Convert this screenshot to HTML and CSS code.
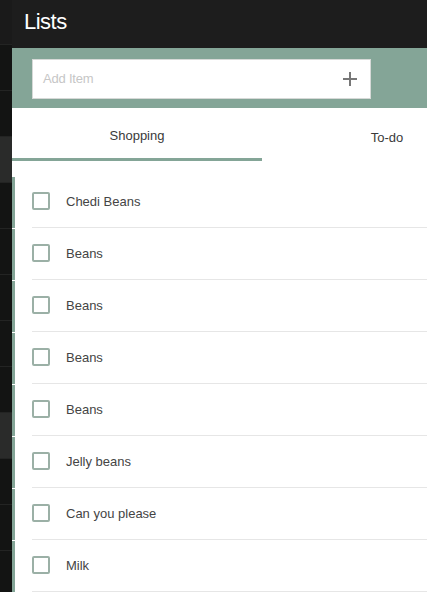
FILE: index.html
```html
<!DOCTYPE html>
<html>
<head>
<meta charset="utf-8">
<link rel="stylesheet" href="styles.css">
</head>
<body>
<div class="app">
  <div class="menu">
    <div class="menu-row"></div>
    <div class="menu-row"></div>
    <div class="menu-row"></div>
    <div class="menu-row active"></div>
    <div class="menu-row"></div>
    <div class="menu-row"></div>
    <div class="menu-row"></div>
    <div class="menu-row"></div>
    <div class="menu-row"></div>
    <div class="menu-row active"></div>
    <div class="menu-row"></div>
    <div class="menu-row"></div>
    <div class="menu-row"></div>
  </div>
  <div class="panel">
    <header class="topbar"><h1 class="title">Lists</h1></header>
    <div class="addbar">
      <div class="add-input">
        <span class="placeholder">Add Item</span>
        <svg class="plus" width="14" height="14" viewBox="0 0 14 14"><path d="M7 0v14M0 7h14" stroke="#777" stroke-width="2" fill="none"/></svg>
      </div>
    </div>
    <nav class="tabs">
      <div class="tab active">Shopping</div>
      <div class="tab">To-do</div>
    </nav>
    <ul class="items">
      <li class="item"><div class="row"><span class="check"></span><span class="label">Chedi Beans</span></div></li>
      <li class="item"><div class="row"><span class="check"></span><span class="label">Beans</span></div></li>
      <li class="item"><div class="row"><span class="check"></span><span class="label">Beans</span></div></li>
      <li class="item"><div class="row"><span class="check"></span><span class="label">Beans</span></div></li>
      <li class="item"><div class="row"><span class="check"></span><span class="label">Beans</span></div></li>
      <li class="item"><div class="row"><span class="check"></span><span class="label">Jelly beans</span></div></li>
      <li class="item"><div class="row"><span class="check"></span><span class="label">Can you please</span></div></li>
      <li class="item"><div class="row"><span class="check"></span><span class="label">Milk</span></div></li>
    </ul>
  </div>
</div>
</body>
</html>
```
FILE: styles.css
```css
html, body {
  margin: 0;
  padding: 0;
  height: 100%;
  overflow: hidden;
  background: #131413;
  font-family: "Liberation Sans", Arial, sans-serif;
}
.app {
  display: flex;
  height: 592px;
  overflow: hidden;
}
.menu {
  width: 12px;
  flex: 0 0 12px;
  display: flex;
  flex-direction: column;
  background: #131413;
}
.menu-row {
  flex: 0 0 45px;
  border-bottom: 1px solid #232423;
}
.menu-row:first-child {
  flex-basis: 44px;
  background: #1a1a1a;
}
.menu-row.active {
  background: #2a2b2a;
}
.panel {
  flex: 1;
  background: #fff;
  overflow: hidden;
  display: flex;
  flex-direction: column;
}
.topbar {
  height: 48px;
  flex: 0 0 48px;
  background: #1d1d1d;
  display: flex;
  align-items: center;
  padding-left: 12px;
}
.title {
  margin: 0;
  color: #fff;
  font-weight: normal;
  font-size: 22px;
  letter-spacing: -0.5px;
  line-height: 1;
  margin-top: -4px;
}
.addbar {
  height: 60px;
  flex: 0 0 60px;
  background: #84a597;
  display: flex;
  align-items: center;
  padding-left: 20px;
}
.add-input {
  box-sizing: border-box;
  width: 339px;
  height: 40px;
  background: #fff;
  border: 1px solid #d6d9d7;
  display: flex;
  align-items: center;
  justify-content: space-between;
  padding: 0 12px 0 10px;
  margin-top: 1px;
}
.placeholder {
  color: #c6c6c6;
  font-size: 13px;
  letter-spacing: -0.2px;
}
.plus {
  display: block;
  margin-right: 1px;
}
.tabs {
  display: flex;
  height: 53px;
  flex: 0 0 53px;
}
.tab {
  flex: 0 0 250px;
  display: flex;
  align-items: center;
  justify-content: center;
  font-size: 13px;
  color: #3a3a3a;
  box-sizing: border-box;
  padding-top: 5px;
}
.tab.active {
  border-bottom: 3px solid #84a597;
}
.items {
  list-style: none;
  margin: 0;
  padding: 16px 0 0 0;
}
.item {
  display: flex;
  border-left: 3px solid #84a597;
  margin-bottom: 1px;
}
.row {
  flex: 1;
  height: 50px;
  margin-left: 17px;
  border-bottom: 1px solid #e6e6e6;
  display: flex;
  align-items: center;
}
.check {
  width: 14px;
  height: 14px;
  border: 2px solid #9bb0a6;
  border-radius: 2px;
  margin-top: -2px;
}
.label {
  margin-left: 16px;
  font-size: 13px;
  color: #444;
  margin-top: -1px;
}
```
